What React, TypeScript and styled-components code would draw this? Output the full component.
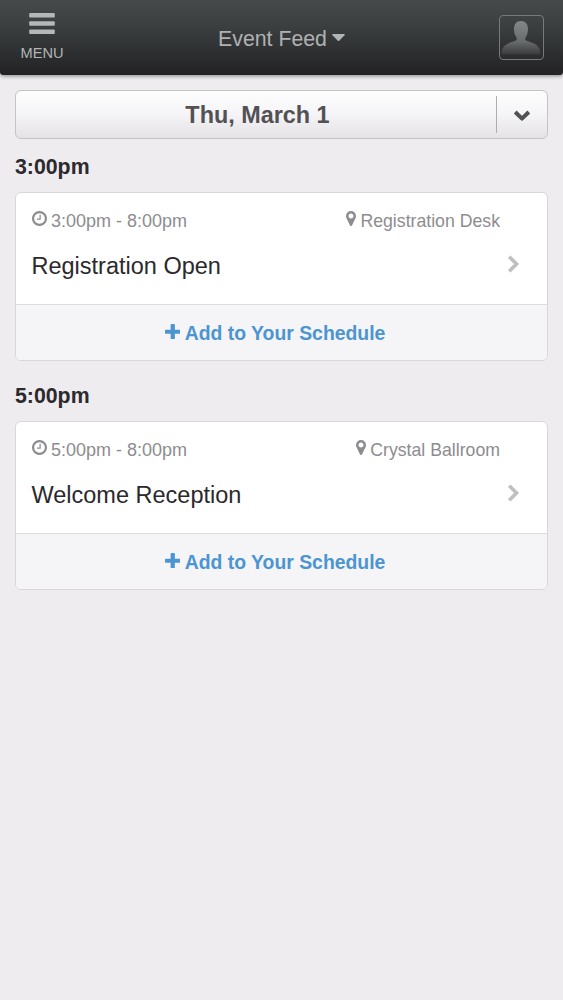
import React from "react";
import styled, { createGlobalStyle } from "styled-components";

const GlobalStyle = createGlobalStyle`
  * { box-sizing: border-box; }
  body {
    margin: 0;
    background: #eeecef;
    font-family: "Liberation Sans", Arial, sans-serif;
  }
  button { font-family: inherit; border: 0; padding: 0; background: none; }
  svg { display: block; flex: none; }
`;

const Page = styled.div`
  min-height: 1000px;
  background: #eeecef;
`;

const Header = styled.header`
  height: 75px;
  display: grid;
  grid-template-columns: 84px 1fr 84px;
  background: linear-gradient(#464a4a 0%, #3b3f3f 35%, #2d2f30 70%, #222224 100%);
  border-radius: 0 0 3px 3px;
  box-shadow: 0 1px 4px rgba(0, 0, 0, 0.45);
`;

const MenuButton = styled.button`
  display: flex;
  flex-direction: column;
  align-items: center;
  padding-top: 12px;
  color: #b2b5b6;
  font-size: 14.6px;
  line-height: 18px;
  gap: 8px;
`;

const FeedTitle = styled.button`
  display: flex;
  justify-content: center;
  align-items: flex-start;
  padding-top: 27px;
  gap: 5px;
  color: #b0b1b2;
  font-size: 21.3px;
  line-height: 24px;

  svg { margin-top: 7px; }
`;

const Profile = styled.div`
  width: 45px;
  height: 45px;
  margin: 15px 0 0 19.5px;
  border: 1.5px solid #77797a;
  border-radius: 4px;
  display: flex;
  justify-content: center;
  align-items: flex-end;
  padding-bottom: 3px;
`;

const Content = styled.main`
  padding: 15px 15px 0;
`;

const DatePicker = styled.div`
  height: 49px;
  display: flex;
  align-items: center;
  border: 1px solid #c5c3c6;
  border-radius: 6px;
  background: linear-gradient(#fefdfe 0%, #f6f5f7 45%, #e5e3e6 100%);
`;

const DateLabel = styled.div`
  flex: 1;
  padding-left: 3px;
  text-align: center;
  color: #535154;
  font-size: 23.4px;
  font-weight: bold;
  line-height: 28px;
`;

const DateToggle = styled.button`
  width: 51px;
  height: 37px;
  border-left: 1px solid #aeacaf;
  display: flex;
  align-items: center;
  justify-content: center;
  padding: 3px 1px 0 0;
`;

const Slot = styled.section`
  height: 229px;
`;

const SlotTime = styled.h2`
  margin: 0;
  height: 53px;
  padding-top: 16px;
  color: #2c2a2d;
  font-size: 21.3px;
  line-height: 24px;
  font-weight: bold;
`;

const Card = styled.article`
  height: 169px;
  border: 1px solid #d9d7da;
  border-radius: 6px;
  background: #fff;
  overflow: hidden;
`;

const Details = styled.div`
  height: 111px;
  padding: 17px 27px 0 15.5px;
`;

const Meta = styled.div`
  display: flex;
  justify-content: space-between;
  padding-right: 20px;
`;

const MetaItem = styled.div<{ $size: number }>`
  display: flex;
  gap: 4.5px;
  color: #8e8c8f;
  font-size: ${(p) => p.$size}px;
  line-height: 22px;

  svg { margin-top: 1px; }
`;

const TitleRow = styled.div`
  display: flex;
  justify-content: space-between;
  padding-top: 20px;

  svg { margin-top: 3px; }
`;

const Title = styled.h3`
  margin: 0;
  color: #2b292c;
  font-size: 23.5px;
  font-weight: normal;
  line-height: 28px;
`;

const AddButton = styled.button`
  width: 100%;
  height: 57px;
  display: flex;
  justify-content: center;
  align-items: flex-start;
  gap: 4.5px;
  padding: 16px 13px 0 0;
  border-top: 1.5px solid #dddbde;
  background: #f5f4f6;
  color: #4b95d1;
  font-size: 19.4px;
  font-weight: bold;
  line-height: 24px;

  svg { margin-top: 2.5px; }
`;

const BarsIcon = () => (
  <svg width="26" height="24" viewBox="0 0 26 24" fill="#b4b8b9">
    <rect x="0.2" y="1" width="25.6" height="4.6" rx="1" />
    <rect x="0.2" y="9.2" width="25.6" height="4.6" rx="1" />
    <rect x="0.2" y="17.4" width="25.6" height="4.6" rx="1" />
  </svg>
);

const CaretIcon = () => (
  <svg width="13" height="8" viewBox="0 0 13 8" fill="#b2b3b4">
    <path d="M1 0h11q1.2.3.5 1.2L7.2 6.8q-.7.6-1.4 0L.5 1.2Q-.2.3 1 0z" />
  </svg>
);

const PersonIcon = () => (
  <svg width="40" height="36" viewBox="0 0 40 36">
    <defs>
      <linearGradient id="person" x1="0" y1="0" x2="0" y2="1">
        <stop offset="0" stopColor="#858889" />
        <stop offset="0.6" stopColor="#6a6d6d" />
        <stop offset="1" stopColor="#3a3b3c" />
      </linearGradient>
    </defs>
    <path
      fill="url(#person)"
      d="M20 1c4.500 0 7 3.200 7 7.800 0 3.700-1 7-2.700 9.200-.3 2 .5 2.600 2.700 3.300 5.500 1.800 12 3.600 12.500 11.700q0 1.500-1.500 1.500H2q-1.500 0-1.500-1.500C1 24.900 7.500 23.100 13 21.300c2.200-.7 3-1.300 2.700-3.300C14 15.800 13 12.500 13 8.800 13 4.200 15.500 1 20 1z"
    />
  </svg>
);

const ChevronDown = () => (
  <svg width="18" height="12" viewBox="0 0 18 12" fill="none" stroke="#535154" strokeWidth="4" strokeLinejoin="round">
    <path d="M2.200 2 9 8.600l6.800-6.600" />
  </svg>
);

const ChevronRight = () => (
  <svg width="13" height="18" viewBox="0 0 13 18" fill="none" stroke="#bfbfc0" strokeWidth="3.700">
    <path d="M2.200 1.700 9.500 9l-7.300 7.300" />
  </svg>
);

const ClockIcon = () => (
  <svg width="15" height="15" viewBox="128 128 1536 1536" fill="currentColor">
    <path d="M1024 544v448q0 14-9 23t-23 9h-320q-14 0-23-9t-9-23v-64q0-14 9-23t23-9h224v-352q0-14 9-23t23-9h64q14 0 23 9t9 23zm416 352q0-148-73-273t-198-198-273-73-273 73-198 198-73 273 73 273 198 198 273 73 273-73 198-198 73-273zm224 0q0 209-103 385.500t-279.500 279.500-385.500 103-385.500-103-279.500-279.500-103-385.500 103-385.500 279.500-279.500 385.500-103 385.500 103 279.500 279.500 103 385.500z" />
  </svg>
);

const PinIcon = () => (
  <svg width="10" height="15" viewBox="384 128 1024 1536" fill="currentColor">
    <path d="M1152 640q0-106-75-181t-181-75-181 75-75 181 75 181 181 75 181-75 75-181zm256 0q0 109-33 179l-364 774q-16 33-47.500 52t-67.500 19-67.500-19-46.500-52l-365-774q-33-70-33-179 0-212 150-362t362-150 362 150 150 362z" />
  </svg>
);

const PlusIcon = () => (
  <svg width="15.5" height="15.5" viewBox="192 128 1408 1408" fill="currentColor">
    <path d="M1600 736v192q0 40-28 68t-68 28h-416v416q0 40-28 68t-68 28h-192q-40 0-68-28t-28-68v-416h-416q-40 0-68-28t-28-68v-192q0-40 28-68t68-28h416v-416q0-40 28-68t68-28h192q40 0 68 28t28 68v416h416q40 0 68 28t28 68z" />
  </svg>
);

const events = [
  { start: "3:00pm", end: "8:00pm", place: "Registration Desk", title: "Registration Open" },
  { start: "5:00pm", end: "8:00pm", place: "Crystal Ballroom", title: "Welcome Reception" },
];

export default function App() {
  return (
    <Page>
      <GlobalStyle />
      <Header>
        <MenuButton>
          <BarsIcon />
          MENU
        </MenuButton>
        <FeedTitle>
          Event Feed
          <CaretIcon />
        </FeedTitle>
        <Profile>
          <PersonIcon />
        </Profile>
      </Header>
      <Content>
        <DatePicker>
          <DateLabel>Thu, March 1</DateLabel>
          <DateToggle aria-label="Choose date">
            <ChevronDown />
          </DateToggle>
        </DatePicker>
        {events.map((event) => (
          <Slot key={event.title}>
            <SlotTime>{event.start}</SlotTime>
            <Card>
              <Details>
                <Meta>
                  <MetaItem $size={18}>
                    <ClockIcon />
                    {event.start} - {event.end}
                  </MetaItem>
                  <MetaItem $size={17.7}>
                    <PinIcon />
                    {event.place}
                  </MetaItem>
                </Meta>
                <TitleRow>
                  <Title>{event.title}</Title>
                  <ChevronRight />
                </TitleRow>
              </Details>
              <AddButton>
                <PlusIcon />
                Add to Your Schedule
              </AddButton>
            </Card>
          </Slot>
        ))}
      </Content>
    </Page>
  );
}
